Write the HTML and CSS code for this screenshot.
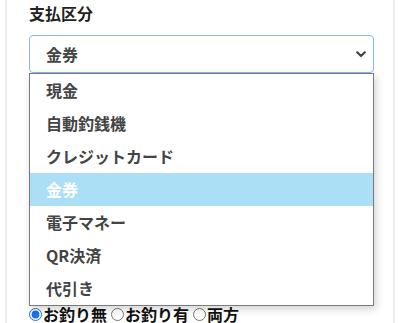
FILE: index.html
```html
<!DOCTYPE html>
<html lang="ja">
<head>
    <meta charset="UTF-8">
    <title>支払区分</title>
    <link rel="stylesheet" href="styles.css">
</head>
<body>
    <div class="panel">
        <div class="field">
            <label class="field__label">支払区分</label>
            <div class="select">
                <div class="select__box">
                    <span>金券</span>
                    <svg class="select__arrow" width="10" height="7" viewBox="0 0 10 7">
                        <path d="M1.2 1.3 L5 5 L8.8 1.3" fill="none" stroke="#444" stroke-width="2.2" stroke-linecap="round" stroke-linejoin="round"/>
                    </svg>
                </div>
                <ul class="select__list">
                    <li>現金</li>
                    <li>自動釣銭機</li>
                    <li>クレジットカード</li>
                    <li class="is-active">金券</li>
                    <li>電子マネー</li>
                    <li>QR決済</li>
                    <li>代引き</li>
                </ul>
            </div>
        </div>
        <div class="change">
            <label><input type="radio" name="change" checked>お釣り無</label>
            <label><input type="radio" name="change">お釣り有</label>
            <label><input type="radio" name="change">両方</label>
        </div>
    </div>
</body>
</html>
```

FILE: styles.css
```css
* {
    box-sizing: border-box;
}
body {
    margin: 0;
    background: #ffffff;
    font-family: "Noto Sans CJK JP", "Noto Sans", sans-serif;
}
.panel {
    margin: 0 5px;
    height: 323px;
    overflow: hidden;
    padding: 0 22px;
    border-left: 2px solid #ececec;
    border-right: 2px solid #ececec;
}
.field__label {
    display: block;
    padding-top: 1px;
    font-size: 16px;
    font-weight: 700;
    line-height: 24px;
    color: #222;
}
.select {
    position: relative;
    margin-top: 10px;
    width: 345px;
}
.select__box {
    height: 38px;
    display: flex;
    align-items: center;
    justify-content: space-between;
    padding: 0 7px 0 16px;
    border: 1px solid #86b7fe;
    border-radius: 4px;
    font-size: 16px;
    font-weight: 700;
    color: #444;
}
.select__list {
    position: absolute;
    left: 0;
    right: 0;
    top: 38px;
    margin: 0;
    padding: 0;
    list-style: none;
    background: #fff;
    border: 1px solid #7a7a7a;
    box-shadow: 2px 3px 8px rgba(0, 0, 0, 0.18);
}
.select__list li {
    height: 33px;
    line-height: 33px;
    padding-left: 16px;
    font-size: 16px;
    font-weight: 700;
    color: #444;
}
.select__list li.is-active {
    background: #aadff5;
    color: #fff;
}
.change {
    margin-top: 231px;
    display: flex;
    gap: 4px;
    font-size: 16px;
    font-weight: 700;
    line-height: 20px;
    color: #111;
}
.change label {
    display: flex;
    align-items: center;
}
.change input {
    margin: 0 1px 0 0;
    width: 13px;
    height: 13px;
    accent-color: #1a73e8;
}
```
